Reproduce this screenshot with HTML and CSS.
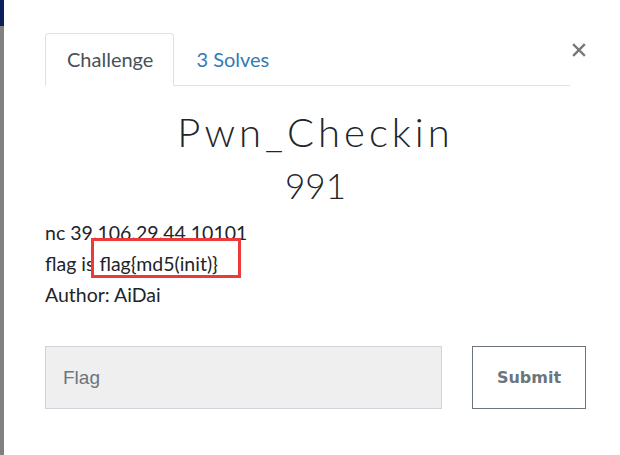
FILE: index.html
```html
<!DOCTYPE html>
<html lang="en">
<head>
<meta charset="utf-8">
<title>Pwn_Checkin</title>
<link rel="stylesheet" href="styles.css">
</head>
<body>
<div class="page">
  <div class="rail"></div>
  <main class="modal">
    <div class="header">
      <ul class="tabs">
        <li class="tab tab-active">Challenge</li>
        <li class="tab tab-link">3 Solves</li>
      </ul>
      <button class="close" type="button" aria-label="Close">
        <svg width="14" height="14" viewBox="0 0 14 14"><path d="M2 2 L12 12 M12 2 L2 12" stroke="#777" stroke-width="2.4" stroke-linecap="square" fill="none"/></svg>
      </button>
    </div>
    <h2 class="title">Pwn_Checkin</h2>
    <h3 class="value">991</h3>
    <div class="desc">
      <p class="line">nc 39.106.29.44 10101</p>
      <p class="line">flag is flag{md5(init)}</p>
      <p class="line">Author: AiDai</p>
      <span class="highlight"></span>
    </div>
    <form class="submit-row">
      <input class="flag-input" type="text" placeholder="Flag">
      <button class="submit-btn" type="button">Submit</button>
    </form>
  </main>
</div>
</body>
</html>
```
FILE: styles.css
```css
* { box-sizing: border-box; }
html, body { margin: 0; padding: 0; background: #fff; }
body { font-family: "Lato", "Liberation Sans", sans-serif; color: #212529; }

.page {
  display: flex;
  width: 620px;
  height: 455px;
  overflow: hidden;
}

.rail {
  width: 4px;
  flex: none;
  background: linear-gradient(to bottom, #0b1f5c 0, #0b1f5c 26px, #808080 26px, #808080 100%);
}

.modal {
  flex: 1;
  padding: 33px 34px 0 41px;
}

.header {
  display: flex;
  align-items: flex-start;
}

.tabs {
  flex: 1;
  display: flex;
  list-style: none;
  margin: 0;
  padding: 0;
  border-bottom: 1px solid #dee2e6;
}

.tab {
  font-size: 20px;
  line-height: 26px;
  padding: 12px 20px 13px 21px;
  margin-bottom: -1px;
  border: 1px solid transparent;
  border-radius: 4px 4px 0 0;
}

.tab-active {
  color: #495057;
  border-color: #dee2e6 #dee2e6 #fff;
  background: #fff;
}

.tab-link { color: #337ab7; }

.close {
  width: 16px;
  height: 16px;
  margin-top: 9px;
  padding: 0 0 0 1px;
  border: 0;
  background: none;
  display: flex;
  align-items: center;
  justify-content: center;
}

.title {
  margin: 22px 0 0;
  text-align: center;
  font-family: "Lato", sans-serif;
  font-weight: 300;
  font-size: 40px;
  line-height: 48px;
  letter-spacing: 4px;
  color: #212529;
}

.value {
  margin: 7px 0 0;
  text-align: center;
  font-weight: 300;
  font-size: 35px;
  line-height: 44px;
  color: #212529;
}

.desc {
  position: relative;
  margin-top: 10px;
}

.line {
  margin: 0;
  font-size: 19.5px;
  line-height: 31px;
  color: #212529;
}

.highlight {
  position: absolute;
  left: 46px;
  top: 21px;
  width: 150px;
  height: 40px;
  border: 3px solid #ec3a3a;
}

.submit-row {
  display: flex;
  gap: 30px;
  margin-top: 36px;
}

.flag-input {
  width: 397px;
  height: 63px;
  padding: 0 17px;
  background: #efefef;
  border: 1px solid #ced4da;
  font-family: "Liberation Sans", Arial, sans-serif;
  font-size: 19px;
  color: #495057;
  outline: none;
}

.flag-input::placeholder { color: #6c757d; }

.submit-btn {
  width: 114px;
  height: 63px;
  background: #fff;
  border: 1px solid #6c757d;
  font-family: "DejaVu Sans", "Liberation Sans", sans-serif;
  font-weight: bold;
  font-size: 16px;
  color: #6c757d;
}
```
